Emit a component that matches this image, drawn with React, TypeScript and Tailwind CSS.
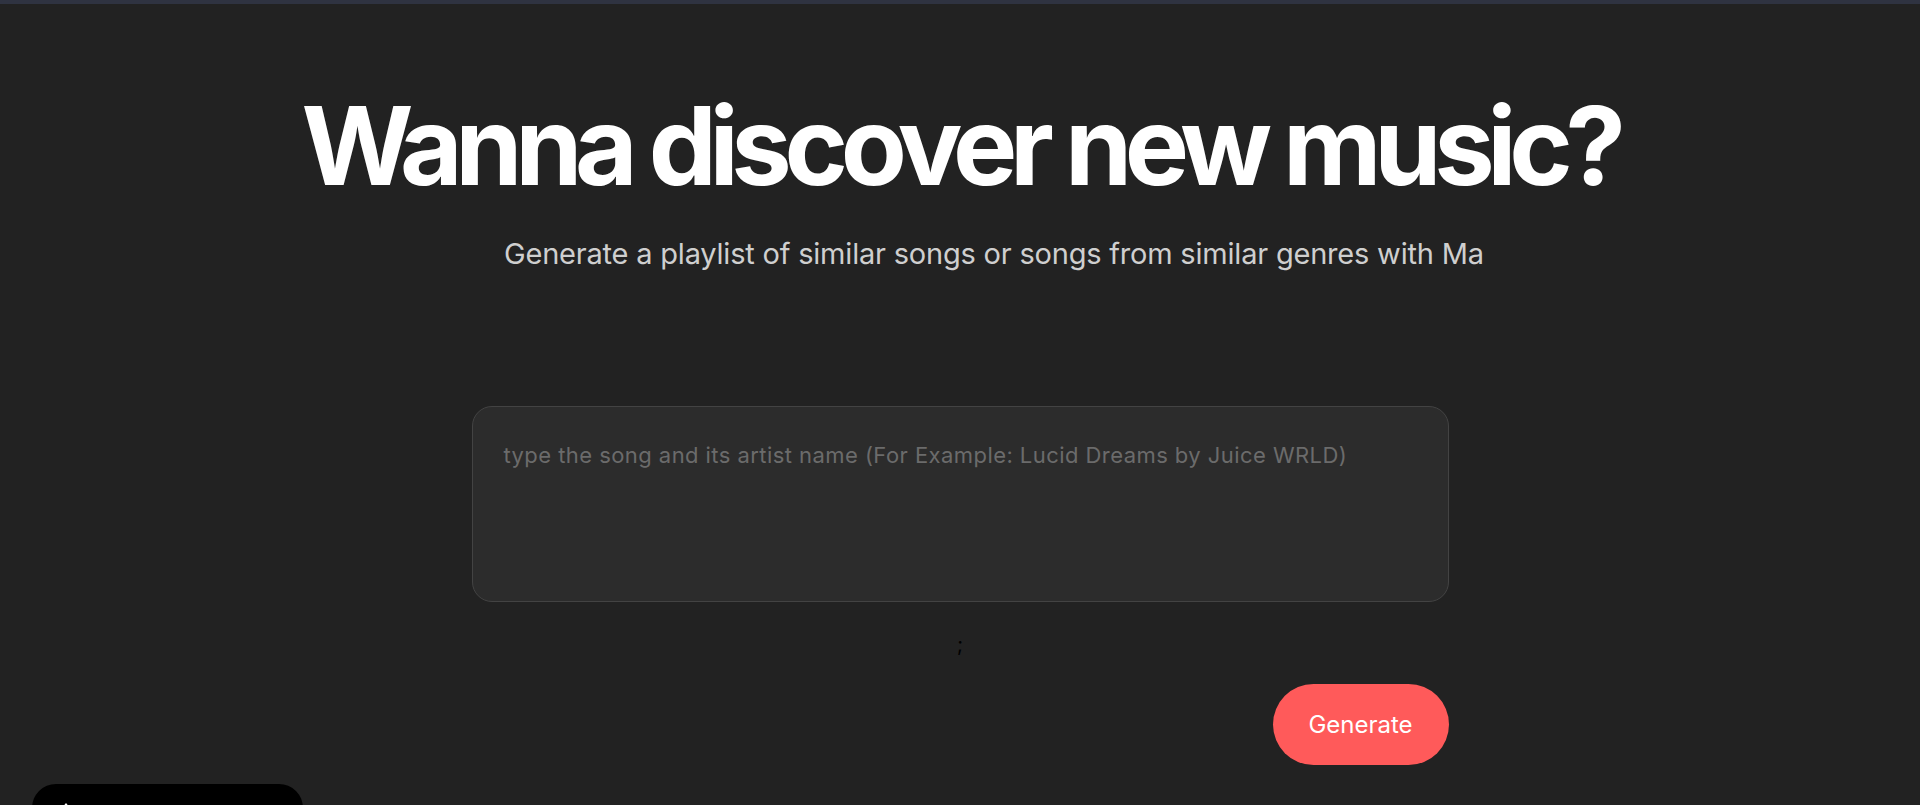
import React from "react";

export default function App() {
  return (
    <div
      className="min-h-screen w-full bg-[#222222] overflow-hidden"
      style={{ fontFamily: "Inter, 'Noto Sans', sans-serif" }}
    >
      <div className="h-[4px] w-full bg-[#2f3341]" />
      <main className="flex flex-col items-center">
        <h1 className="mt-[88px] h-[108px] text-[108px] leading-[108px] font-bold tracking-[-0.068em] text-white whitespace-nowrap">
          Wanna discover new music?
        </h1>
        <div className="mt-[34px] ml-[68px] w-[980px] overflow-hidden whitespace-nowrap">
          <p className="text-[29px] leading-[40px] text-[#cfcfcf] tracking-[-0.007em]">
            Generate a playlist of similar songs or songs from similar genres with Manrope AI
          </p>
        </div>
        <textarea
          className="mt-[132px] w-[977px] h-[196px] resize-none rounded-[20px] border border-[#434343] bg-[#2c2c2c] px-[31px] pt-[32px] text-[22px] leading-[33px] tracking-[0.02em] text-white placeholder:text-[#6b6b6b] outline-none"
          placeholder="type the song and its artist name (For Example: Lucid Dreams by Juice WRLD)"
        />
        <div className="mt-[28px] h-[28px] text-[20px] leading-[28px] text-black">;</div>
        <div className="mt-[26px] w-[977px] flex justify-end">
          <button className="h-[81px] w-[176px] rounded-full bg-[#ff5a5a] text-[24px] text-white">
            Generate
          </button>
        </div>
        <div className="h-[60px]" />
      </main>
      <div className="fixed left-[32px] bottom-[-27px] h-[48px] w-[271px] rounded-[24px] bg-black">
        <svg
          className="absolute left-[29px] top-[18px]"
          width="10"
          height="14"
          viewBox="0 0 10 14"
        >
          <path d="M5 1 L9 6 L1 6 Z" fill="white" />
          <rect x="4" y="5" width="2" height="9" fill="white" />
        </svg>
      </div>
    </div>
  );
}
